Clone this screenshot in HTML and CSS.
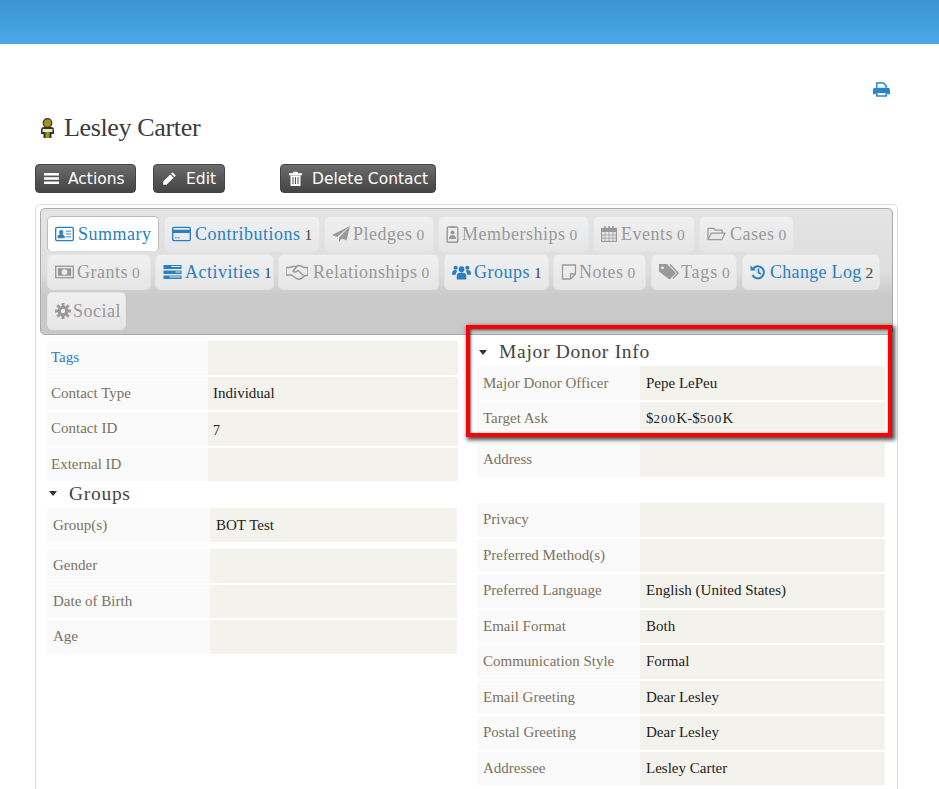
FILE: index.html
```html
<!DOCTYPE html>
<html lang="en">
<head>
<meta charset="utf-8">
<title>Lesley Carter</title>
<link rel="stylesheet" href="styles.css">
</head>
<body>
<div class="page">
  <header class="topbar"></header>
  <div class="printrow">
    <svg class="ico-print" viewBox="0 0 18 16"><path d="M4 6V1h7l3 3v2" fill="none" stroke="#2a84c6" stroke-width="1.6"/><path d="M2 6h14a2 2 0 0 1 2 2v5h-3v-2H3v2H0V8a2 2 0 0 1 2-2z" fill="#2a84c6"/><path d="M4 11h10v4H4z" fill="#fff" stroke="#2a84c6" stroke-width="1.6"/></svg>
  </div>
  <main class="main">
    <h1 class="title">
      <svg class="ico-person" viewBox="0 0 15 20"><circle cx="7.500" cy="5" r="4.300" fill="#a39412" stroke="#333" stroke-width="1.200"/><path d="M1 12a3 3 0 0 1 3-3h7a3 3 0 0 1 3 3v4h-2.500v4h-8v-4H1z" fill="#333"/><path d="M2.500 11h10v3h-10z" fill="#e4e4d8"/><path d="M5.500 14h4v6h-4z" fill="#a39412"/></svg>
      <span>Lesley Carter</span>
    </h1>
    <div class="actions">
      <a class="btn btn-actions"><svg class="btn-ico" viewBox="0 0 15 13"><path d="M0 1h15v2.400H0zM0 5.300h15v2.400H0zM0 9.600h15V12H0z" fill="#fff"/></svg>Actions</a>
      <a class="btn btn-edit"><svg class="btn-ico" viewBox="0 0 15 15"><path d="M10.500 1.200l3.300 3.300-1.500 1.500L9 2.700zM8.200 3.500l3.300 3.300-7 7H1.200v-3.300z" fill="#fff"/></svg>Edit</a>
      <a class="btn btn-delete"><svg class="btn-ico trash" viewBox="0 0 13 15"><path d="M0 2.500h13V4H0zM4.500 2.500V1h4v1.500" fill="#fff" stroke="#fff" stroke-width=".6"/><path d="M1.500 4.500h10V15h-10z" fill="#fff"/><path d="M4 6v7M6.500 6v7M9 6v7" stroke="#555" stroke-width="1"/></svg>Delete Contact</a>
    </div>
    <section class="panel">
      <nav class="tabs">
        <a class="tab t-summary active link"><svg class="ti" viewBox="0 0 20 16"><rect x=".7" y="1" width="18.600" height="14" rx="1.500" fill="none" stroke="currentColor" stroke-width="1.400"/><circle cx="6.500" cy="6" r="2.300" fill="currentColor"/><path d="M3 12c0-2.500 1.500-3.500 3.500-3.500S10 9.500 10 12zM11.500 5H17M11.500 8H17M11.500 11H17" fill="currentColor" stroke="currentColor" stroke-width="1"/></svg>Summary</a>
        <a class="tab t-contrib link"><svg class="ti" viewBox="0 0 20 16"><rect x=".7" y="1" width="18.600" height="14" rx="1.500" fill="none" stroke="currentColor" stroke-width="1.400"/><path d="M1 3.500h18V7H1z" fill="currentColor"/><path d="M3 12h2M6 12h2" stroke="currentColor"/></svg>Contributions <b>1</b></a>
        <a class="tab t-pledges"><svg class="ti" viewBox="0 0 18 16"><path d="M18 0L0 9l5 2zM18 0L7 11.500V16l3-3.500 4.500 2z" fill="currentColor"/></svg>Pledges <b>0</b></a>
        <a class="tab t-member"><svg class="ti narrow" viewBox="0 0 12 18"><rect x=".7" y="2" width="10.600" height="15.300" rx="1.200" fill="none" stroke="currentColor" stroke-width="1.400"/><path d="M4 1h4v2H4z" fill="currentColor"/><circle cx="6" cy="7.500" r="2" fill="currentColor"/><path d="M2.500 14c0-3 1.500-4 3.500-4s3.500 1 3.500 4z" fill="currentColor"/></svg>Memberships <b>0</b></a>
        <a class="tab t-events"><svg class="ti sq" viewBox="0 0 16 16"><rect x=".6" y="2.500" width="14.800" height="13" fill="none" stroke="currentColor" stroke-width="1.200"/><path d="M.6 3h14.800v3H.6z" fill="currentColor"/><path d="M4 0v4M8 0v4M12 0v4" stroke="currentColor" stroke-width="1.600"/><path d="M4 6v9M8 6v9M12 6v9M1 9h14M1 12.200h14" stroke="currentColor" stroke-width=".8"/></svg>Events <b>0</b></a>
        <a class="tab t-cases"><svg class="ti" viewBox="0 0 20 16"><path d="M1 14V2h6l2 2h7v3M1 14l3.500-7H19l-3.500 7z" fill="none" stroke="currentColor" stroke-width="1.300" stroke-linejoin="round"/></svg>Cases <b>0</b></a>

        <a class="tab t-grants"><svg class="ti" viewBox="0 0 20 16"><rect x=".7" y="2" width="18.600" height="12" fill="none" stroke="currentColor" stroke-width="1.400"/><rect x="3" y="4" width="14" height="8" fill="currentColor"/><circle cx="10" cy="8" r="3" fill="#eee"/></svg>Grants <b>0</b></a>
        <a class="tab t-activ link"><svg class="ti" viewBox="0 0 18 16"><path d="M0 1h18v4H0zM0 6.500h18v3.500H0zM0 11.500h18V15H0z" fill="currentColor"/><path d="M8 2.500h9M12 8h5M6 13h11" stroke="#eee" stroke-width="1"/></svg>Activities <b>1</b></a>
        <a class="tab t-rel"><svg class="ti wide" viewBox="0 0 22 16"><path d="M0 3.500h3.500L7 2.500h3l2-1 3 .5 3 1.500h4v8h-3l-1.500 1.500-4 2.500-3-1-3-2-2-1.500H0z" fill="none" stroke="currentColor" stroke-width="1.500" stroke-linejoin="round"/><path d="M11 2.500L7 7c1 1.500 3 1.500 5-.5l5.500 5" fill="none" stroke="currentColor" stroke-width="1.500" stroke-linejoin="round"/></svg>Relationships <b>0</b></a>
        <a class="tab t-groups link"><svg class="ti" viewBox="0 0 20 16"><circle cx="10" cy="5" r="3" fill="currentColor"/><circle cx="3.800" cy="3.500" r="2.200" fill="currentColor"/><circle cx="16.200" cy="3.500" r="2.200" fill="currentColor"/><path d="M5 16v-4c0-2.500 2-3.500 5-3.500s5 1 5 3.500v4z" fill="currentColor"/><path d="M0 10c0-3 1.500-4 3.500-4 .8 0 1.500.2 2 .8C4.500 8 4 9.500 4 11H0zM20 10c0-3-1.500-4-3.500-4-.8 0-1.500.2-2 .8 1 1.200 1.500 2.700 1.500 4.200h4z" fill="currentColor"/></svg>Groups <b>1</b></a>
        <a class="tab t-notes"><svg class="ti sq" viewBox="0 0 16 16"><path d="M1.500 1h13v9l-5 5h-8zM14.500 10h-5v5" fill="none" stroke="currentColor" stroke-width="1.300"/></svg>Notes <b>0</b></a>
        <a class="tab t-tags"><svg class="ti tagged" viewBox="0 0 20 16"><path d="M0 0h8l9 9-6.500 6.500L0 7.500z" fill="currentColor"/><path d="M11 .5l8 8.500-5 5.500" fill="none" stroke="currentColor" stroke-width="1.400"/><circle cx="3.500" cy="3.800" r="1.400" fill="#eee"/></svg>Tags <b>0</b></a>
        <a class="tab t-log link"><svg class="ti sq" viewBox="0 0 16 16"><path d="M3.500 4.200A6 6 0 1 1 2.500 11" fill="none" stroke="currentColor" stroke-width="2"/><path d="M.5 1.500L6 6.500H.5z" fill="currentColor"/><path d="M8.500 4.500v4l2.500 1.500" fill="none" stroke="currentColor" stroke-width="1.700"/></svg>Change Log <b>2</b></a>

        <a class="tab t-social"><svg class="ti sq" viewBox="0 0 16 16"><circle cx="8" cy="8" r="3.800" fill="none" stroke="currentColor" stroke-width="3"/><path d="M8 0v16M0 8h16M2.300 2.300l11.400 11.400M13.700 2.300L2.300 13.700" stroke="currentColor" stroke-width="2.800"/><circle cx="8" cy="8" r="2.200" fill="#eee"/></svg>Social</a>
      </nav>
      <div class="cols">
        <div class="col col-left">
          <div class="fields tight">
            <div class="row"><div class="lbl link">Tags</div><div class="val"></div></div>
            <div class="row"><div class="lbl">Contact Type</div><div class="val">Individual</div></div>
            <div class="row"><div class="lbl">Contact ID</div><div class="val"><span class="drop">7</span></div></div>
            <div class="row"><div class="lbl">External ID</div><div class="val"></div></div>
          </div>
          <h2 class="sec sec-groups"><i class="caret"></i>Groups</h2>
          <div class="fields shifted">
            <div class="row"><div class="lbl">Group(s)</div><div class="val">BOT Test</div></div>
          </div>
          <div class="fields shifted gap7">
            <div class="row"><div class="lbl">Gender</div><div class="val"></div></div>
            <div class="row"><div class="lbl">Date of Birth</div><div class="val"></div></div>
            <div class="row"><div class="lbl">Age</div><div class="val"></div></div>
          </div>
        </div>
        <div class="col col-right">
          <h2 class="sec sec-donor"><i class="caret"></i>Major Donor Info</h2>
          <div class="fields">
            <div class="row"><div class="lbl">Major Donor Officer</div><div class="val">Pepe LePeu</div></div>
            <div class="row"><div class="lbl">Target Ask</div><div class="val"><span>$<small>200</small>K-$<small>500</small>K</span></div></div>
          </div>
          <div class="fields gap6">
            <div class="row"><div class="lbl">Address</div><div class="val"></div></div>
          </div>
          <div class="fields gap27">
            <div class="row"><div class="lbl">Privacy</div><div class="val"></div></div>
            <div class="row"><div class="lbl">Preferred Method(s)</div><div class="val"></div></div>
            <div class="row"><div class="lbl">Preferred Language</div><div class="val">English (United States)</div></div>
            <div class="row"><div class="lbl">Email Format</div><div class="val">Both</div></div>
            <div class="row"><div class="lbl">Communication Style</div><div class="val">Formal</div></div>
            <div class="row"><div class="lbl">Email Greeting</div><div class="val">Dear Lesley</div></div>
            <div class="row"><div class="lbl">Postal Greeting</div><div class="val">Dear Lesley</div></div>
            <div class="row"><div class="lbl">Addressee</div><div class="val">Lesley Carter</div></div>
          </div>
          <div class="highlight"></div>
        </div>
      </div>
    </section>
  </main>
</div>
</body>
</html>
```
FILE: styles.css
```css
* { box-sizing: border-box; }
html, body { margin: 0; height: 789px; overflow: hidden; background: #fff; }
body { font-family: "Liberation Serif", "DejaVu Serif", serif; color: #222; }
.topbar { height: 44px; background: linear-gradient(#3a96d2, #49a8e6); }
.printrow { display: flex; justify-content: flex-end; padding: 38px 49px 0 0; height: 63px; }
.ico-print { width: 17px; height: 15px; }
.main { padding: 0 41px 0 35px; }
.title { display: flex; align-items: center; gap: 9px; margin: 0; height: 42px; padding-left: 5px; font-weight: 400; font-size: 26px; letter-spacing: -.35px; color: #3a3a3a; }
.ico-person { width: 15px; height: 20px; }
.actions { display: flex; margin-top: 15px; height: 29px; }
.btn { display: flex; align-items: center; height: 29px; border: 1px solid #444; border-radius: 4px; background: linear-gradient(#6b6b6b, #444); color: #fff; font-family: "DejaVu Sans", sans-serif; font-size: 15.500px; padding-left: 8px; }
.btn-actions { width: 101px; }
.btn-edit { width: 72px; margin-left: 17px; }
.btn-delete { width: 156px; margin-left: 55px; }
.btn-ico { width: 15px; height: 15px; margin-right: 9px; flex: none; }
.trash { width: 13px; margin-right: 10px; }
.panel { margin-top: 11px; border: 1px solid #ddd; border-radius: 5px 5px 0 0; padding: 3px 4px 30px; height: 640px; }
.tabs { display: flex; flex-wrap: wrap; align-content: flex-start; gap: 2px 4px; height: 127px; padding: 7px 6px; border: 1px solid #aaa; border-radius: 5px; background: linear-gradient(#e4e4e4 0, #dedede 50%, #c9c9c9 70%, #c9c9c9 100%); }
.tab { display: flex; align-items: center; height: 36px; padding-left: 7px; white-space: nowrap; font-size: 18px; letter-spacing: .5px; border-radius: 5px; color: #999; background: linear-gradient(#f0f0f0, #e6e6e6); border: 1px solid #e4e4e4; }
.tab b { font-weight: 400; margin-left: 4px; font-size: 15.500px; position: relative; top: 1px; }
.tab.link { color: #2a7fc0; }
.tab.link b { color: #444; }
.tab.active { background: #fff; border-color: #bbb; border-bottom-color: #ddd; }
.ti { width: 19px; height: 16px; margin-right: 4px; flex: none; }
.ti.narrow { width: 13px; height: 18px; margin-right: 3px; }
.ti.wide { width: 22px; margin-right: 5px; }
.ti.sq { width: 16px; }
.ti.tagged { width: 20px; height: 16px; margin-right: 2px; }
.t-summary { width: 112px; }
.t-contrib { width: 156px; margin-left: 1px; }
.t-pledges { width: 110px; }
.t-pledges .ti { width: 18px; margin-right: 3px; }
.t-member { width: 151px; }
.t-events { width: 102px; }
.t-cases { width: 95px; margin-right: 90px; }
.t-grants { width: 104px; }
.t-grants .ti, .t-activ .ti { margin-right: 3px; }
.t-activ { width: 119px; }
.t-rel { width: 161px; }
.t-groups { width: 105px; margin-left: 1px; }
.t-groups .ti { margin-right: 3px; }
.t-notes { width: 93px; }
.t-notes .ti { margin-right: 2px; }
.t-tags { width: 86px; margin-left: 1px; letter-spacing: .8px; }
.t-log { width: 138px; margin-left: 1px; letter-spacing: .3px; }
.t-social { width: 79px; height: 38px; }
.t-social .ti { margin-right: 2px; }
.cols { display: grid; grid-template-columns: 411px 408px; column-gap: 19px; padding-left: 7px; }
.col { position: relative; }
.col-left { padding-top: 6px; }
.fields { display: flex; flex-direction: column; gap: 2px; }
.row { display: grid; grid-template-columns: 163px 1fr; height: 33.500px; font-size: 15px; }
.lbl { display: flex; align-items: center; padding-left: 6px; background: #fafafa; color: #7b7260; }
.lbl.link { color: #2a7fc0; }
.val { display: flex; align-items: center; padding-left: 6px; background: #f3f2ec; color: #222; }
.val small { font-size: 13px; letter-spacing: 1.100px; }
.drop { position: relative; top: 2px; font-size: 14px; }
.tight .row { grid-template-columns: 161px 1fr; }
.tight .lbl { padding-left: 4px; }
.tight .val { padding-left: 5px; }
.shifted { width: 410px; }
.gap7 { margin-top: 7.250px; }
.gap6 { margin-top: 7.750px; }
.gap27 { margin-top: 26.500px; }
.sec { display: flex; align-items: center; margin: 0; font-weight: 400; font-size: 19.500px; letter-spacing: .7px; color: #444; }
.sec-groups { height: 27.250px; padding: 0 0 2px 2px; }
.sec-donor { height: 31.250px; padding: 3px 0 0 2px; }
.caret { width: 0; height: 0; margin-right: 12px; border-left: 4.500px solid transparent; border-right: 4.500px solid transparent; border-top: 5px solid #333; }
.highlight { position: absolute; left: -11px; top: -10px; width: 426px; height: 112px; border: 4px solid #f00; box-shadow: 2px 2px 4px 1px rgba(0,0,0,.7), inset 1px 1px 3px rgba(0,0,0,.6); pointer-events: none; }
```
